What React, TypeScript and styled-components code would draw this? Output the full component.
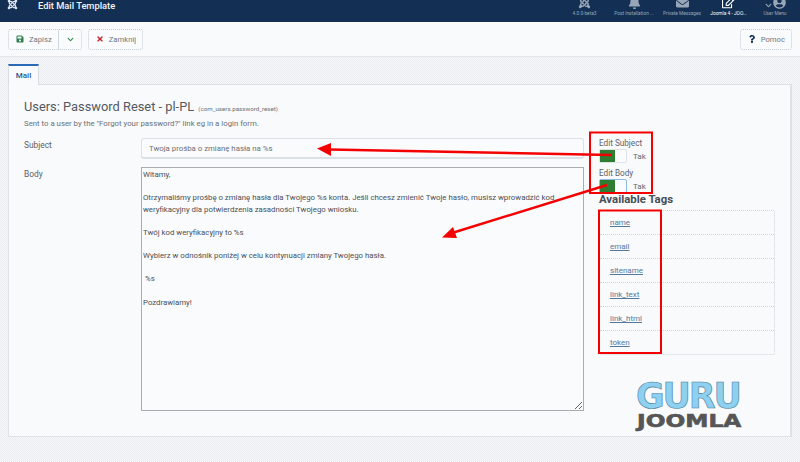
import React from "react";
import styled, { createGlobalStyle } from "styled-components";
import { FaJoomla, FaBell, FaEnvelope, FaRegEdit, FaUserCircle, FaChevronDown, FaSave, FaTimes, FaQuestion } from "react-icons/fa";

const Global = createGlobalStyle`
  html, body { margin: 0; padding: 0; background: #f0f3f5; }
  * { box-sizing: border-box; }
  body { font-family: Roboto, "Liberation Sans", sans-serif; }
`;

const Page = styled.div`
  position: relative;
  width: 800px;
  height: 462px;
  overflow: hidden;
  display: flex;
  flex-direction: column;
  background: repeating-conic-gradient(#f8f9fa 0 25%, #e8ecef 0 50%) 0 0 / 2px 2px;
  color: #4d5560;
`;

const Header = styled.header`
  flex: 0 0 22px;
  height: 22px;
  background: #132f53;
  display: flex;
  align-items: flex-start;
  overflow: hidden;
`;

const Brand = styled.div`
  width: 38px;
  height: 22px;
  color: #dfe5ec;
  font-size: 11px;
  display: flex;
  justify-content: flex-end;
  padding: 0 20px 0 0;
  svg { margin-top: -1px; }
`;

const PageTitle = styled.div`
  color: #f3f5f8;
  font-size: 9.3px;
  font-weight: 500;
  line-height: 11px;
  flex: 1;
`;

const HeaderMenu = styled.nav`
  display: flex;
  margin-right: 1.5px;
`;

const HeaderItem = styled.div<{ $w: number; $active?: boolean }>`
  width: ${(p) => p.$w}px;
  height: 18px;
  display: flex;
  flex-direction: column;
  align-items: center;
  justify-content: flex-end;
  color: ${(p) => (p.$active ? "#ffffff" : "#98a6b8")};
  font-size: 4.8px;
  line-height: 8px;
  white-space: nowrap;
`;

const HeaderIcon = styled.div`
  height: 8px;
  margin-bottom: 1px;
  display: flex;
  align-items: flex-end;
  gap: 1px;
  font-size: 13px;
`;

const Toolbar = styled.div`
  flex: 0 0 35px;
  background: #f9fafc;
  border-bottom: 1px solid #e2e6ea;
  display: flex;
  align-items: center;
  padding: 0 8px;
  gap: 6px;
`;

const ToolGroup = styled.div`
  display: flex;
  height: 21px;
  background: #fafbfc;
  border: 1px dotted #c3ccd4;
  border-radius: 3px;
`;

const ToolButton = styled.div`
  display: flex;
  align-items: center;
  gap: 5px;
  padding: 0 6px 0 7px;
  font-size: 7.7px;
  color: #6f7780;
  & + & { border-left: 1px solid #cfd6dc; padding: 0 7px 0 8px; }
`;

const Spacer = styled.div`
  flex: 1;
`;

const Tabs = styled.div`
  padding: 7px 8px 0 8px;
  flex: 1;
  display: flex;
  flex-direction: column;
`;

const Tab = styled.div`
  width: 31px;
  height: 21px;
  background: #f9fafc;
  border-top: 2px solid #2a69b8;
  border-right: 1px solid #d7dde2;
  border-left: 1px solid #d7dde2;
  color: #2a5a88;
  font-size: 8px;
  font-weight: 500;
  display: flex;
  align-items: center;
  justify-content: center;
  position: relative;
  z-index: 1;
  margin-bottom: -1px;
`;

const Panel = styled.main`
  height: 353px;
  background: #f9fafc;
  border: 1px solid #dde2e6;
  border-right-width: 2px;
  padding: 13px 15px 0;
`;

const Title = styled.h1`
  margin: 0;
  font-size: 12.85px;
  font-weight: 400;
  line-height: 18px;
  color: #55595f;
`;

const Small = styled.small`
  font-size: 6.2px;
  margin-left: 1px;
  color: #6b7178;
`;

const Description = styled.p`
  margin: 0;
  font-size: 7.8px;
  line-height: 11px;
  color: #6a7077;
`;

const Columns = styled.div`
  display: flex;
  margin-top: 9px;
`;

const FormColumn = styled.div`
  width: 560px;
  display: flex;
  flex-direction: column;
  gap: 8px;
`;

const Row = styled.div`
  display: flex;
`;

const FieldLabel = styled.div`
  width: 117px;
  font-size: 8.4px;
  line-height: 11px;
  padding-top: 2px;
  color: #5b626a;
`;

const SubjectInput = styled.div`
  width: 443px;
  height: 21px;
  background: #fafbfd;
  border: 1px solid #dbe1e7;
  border-bottom-width: 2px;
  border-radius: 3px;
  padding: 0 7px;
  font-size: 7.8px;
  line-height: 19px;
  color: #6a7077;
`;

const BodyArea = styled.textarea`
  width: 443px;
  height: 244px;
  margin: 0;
  padding: 1px 1px;
  background: #fafbfd;
  border: 1px solid #a9adb1;
  font-family: Roboto, "Liberation Sans", sans-serif;
  font-size: 7.82px;
  line-height: 11.6px;
  color: #4a4f55;
  outline: none;
  resize: vertical;
  overflow: hidden;
`;

const Side = styled.aside`
  width: 177px;
  margin-left: 15px;
`;

const SwitchLabel = styled.div`
  font-size: 8.2px;
  line-height: 10px;
  color: #5b626a;
`;

const SwitchRow = styled.div`
  display: flex;
  align-items: center;
  gap: 6px;
  height: 14px;
  margin: 1px 0 5px;
  font-size: 8px;
  color: #616870;
`;

const Switch = styled.div<{ $focus?: boolean }>`
  width: 28px;
  height: 14px;
  background: #fbfcfd;
  border: 1px solid ${(p) => (p.$focus ? "#8dbbe0" : "#dde2e6")};
  border-radius: 2px;
  &::before {
    content: "";
    display: block;
    width: 15px;
    height: 100%;
    background: #2f7d32;
  }
`;

const TagsHeading = styled.h3`
  margin: -6px 0 4px;
  font-size: 11.4px;
  line-height: 14px;
  font-weight: 700;
  color: #484e55;
`;

const TagTable = styled.div`
  border: 1px dotted #cfd5da;
  border-radius: 2px;
`;

const TagRow = styled.div`
  height: 24px;
  padding-left: 10px;
  display: flex;
  align-items: center;
  &:first-child { height: 23px; }
  & + & { border-top: 1px dotted #cfd5da; }
`;

const TagLink = styled.a`
  font-size: 8px;
  color: #55799c;
  text-decoration: underline;
`;

const Overlay = styled.svg`
  position: absolute;
  inset: 0;
  width: 800px;
  height: 462px;
  pointer-events: none;
`;

const Logo = styled.div`
  position: absolute;
  left: 636px;
  top: 383px;
  width: 108px;
  font-family: "DejaVu Sans", sans-serif;
  font-weight: 700;
`;

const LogoTop = styled.div`
  font-size: 35px;
  line-height: 26px;
  letter-spacing: -2.2px;
  color: #8dd0ef;
  -webkit-text-stroke: 0.6px #4b7f9c;
  white-space: nowrap;
`;

const LogoBottom = styled.div`
  margin: 6px 0 0 1px;
  font-size: 17.5px;
  line-height: 13px;
  color: #565656;
  -webkit-text-stroke: 0.6px #565656;
  white-space: nowrap;
  transform: scaleX(1.33);
  transform-origin: left center;
`;

const menu = [
  { w: 50, label: "4.0.0-beta3", icon: <FaJoomla /> },
  { w: 49, label: "Post Installation ...", icon: <FaBell /> },
  { w: 47, label: "Private Messages", icon: <FaEnvelope /> },
  { w: 46, label: "Joomla 4 - JOO...", icon: <FaRegEdit />, active: true },
  { w: 47, label: "User Menu", icon: <><FaChevronDown style={{ fontSize: 7 }} /><FaUserCircle /></> },
];

const tags = ["name", "email", "sitename", "link_text", "link_html", "token"];

const body = `Witamy,

Otrzymaliśmy prośbę o zmianę hasła dla Twojego %s konta. Jeśli chcesz zmienić Twoje hasło, musisz wprowadzić kod weryfikacyjny dla potwierdzenia zasadności Twojego wniosku.

Twój kod weryfikacyjny to %s

Wybierz w odnośnik poniżej w celu kontynuacji zmiany Twojego hasła.

 %s

Pozdrawiamy!`;

export default function App() {
  return (
    <Page>
      <Global />
      <Header>
        <Brand><FaJoomla /></Brand>
        <PageTitle>Edit Mail Template</PageTitle>
        <HeaderMenu>
          {menu.map((m) => (
            <HeaderItem key={m.label} $w={m.w} $active={m.active}>
              <HeaderIcon>{m.icon}</HeaderIcon>
              {m.label}
            </HeaderItem>
          ))}
        </HeaderMenu>
      </Header>
      <Toolbar>
        <ToolGroup>
          <ToolButton><FaSave color="#2e7d4f" size={8} />Zapisz</ToolButton>
          <ToolButton><FaChevronDown color="#2e8b4a" size={7} /></ToolButton>
        </ToolGroup>
        <ToolGroup>
          <ToolButton><FaTimes color="#c8282d" size={8} />Zamknij</ToolButton>
        </ToolGroup>
        <Spacer />
        <ToolGroup>
          <ToolButton><FaQuestion color="#132f53" size={8} />Pomoc</ToolButton>
        </ToolGroup>
      </Toolbar>
      <Tabs>
        <Tab>Mail</Tab>
        <Panel>
          <Title>Users: Password Reset - pl-PL <Small>(com_users.password_reset)</Small></Title>
          <Description>Sent to a user by the "Forgot your password?" link eg in a login form.</Description>
          <Columns>
            <FormColumn>
              <Row>
                <FieldLabel>Subject</FieldLabel>
                <SubjectInput>Twoja prośba o zmianę hasła na %s</SubjectInput>
              </Row>
              <Row>
                <FieldLabel>Body</FieldLabel>
                <BodyArea readOnly defaultValue={body} />
              </Row>
            </FormColumn>
            <Side>
              <SwitchLabel>Edit Subject</SwitchLabel>
              <SwitchRow><Switch />Tak</SwitchRow>
              <SwitchLabel>Edit Body</SwitchLabel>
              <SwitchRow><Switch $focus />Tak</SwitchRow>
              <TagsHeading>Available Tags</TagsHeading>
              <TagTable>
                {tags.map((t) => (
                  <TagRow key={t}><TagLink href="#">{t}</TagLink></TagRow>
                ))}
              </TagTable>
            </Side>
          </Columns>
        </Panel>
      </Tabs>
      <Logo>
        <LogoTop>GURU</LogoTop>
        <LogoBottom>JOOMLA</LogoBottom>
      </Logo>
      <Overlay viewBox="0 0 800 462">
        <g fill="none" stroke="#f50000" strokeWidth="2">
          <rect x="590" y="132.5" width="62" height="60.5" />
          <rect x="599" y="210.5" width="62" height="142.5" />
        </g>
        <g fill="none" stroke="#f50000" strokeWidth="2.4">
          <path d="M612 155 L330 149.5" />
          <path d="M607 185 L452 233" />
        </g>
        <g fill="#f50000">
          <path d="M317 148.5 L331 143 L331 156 Z" />
          <path d="M442 237.5 L453 227 L457 238 Z" />
        </g>
      </Overlay>
    </Page>
  );
}
